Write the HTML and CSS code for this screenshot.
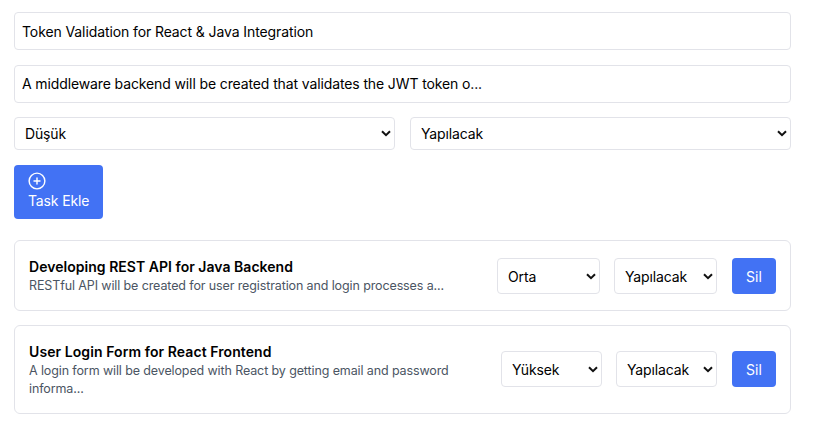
FILE: index.html
```
<!DOCTYPE html>
<html lang="tr">
<head>
<meta charset="utf-8">
<title>Tasks</title>
<link rel="stylesheet" href="styles.css">
</head>
<body>
<main class="page">
  <form class="task-form">
    <input class="field" type="text" value="Token Validation for React &amp; Java Integration">
    <input class="field field-desc" type="text" value="A middleware backend will be created that validates the JWT token o...">
    <div class="form-selects">
      <div class="select"><select><option>Düşük</option></select><svg class="chevron" viewBox="0 0 10 7"><path d="M1 1.2 5 5.2 9 1.2"/></svg></div>
      <div class="select"><select><option>Yapılacak</option></select><svg class="chevron" viewBox="0 0 10 7"><path d="M1 1.2 5 5.2 9 1.2"/></svg></div>
    </div>
    <button class="btn btn-add" type="button">
      <svg class="plus" viewBox="0 0 24 24"><path d="M12 8v8M8 12h8M22.5 12a10.5 10.5 0 1 1-21 0 10.5 10.5 0 0 1 21 0Z"/></svg>
      <span>Task Ekle</span>
    </button>
  </form>
  <section class="tasks">
    <article class="card">
      <div class="card-text">
        <h2>Developing REST API for Java Backend</h2>
        <p>RESTful API will be created for user registration and login processes a...</p>
      </div>
      <div class="card-actions">
        <div class="select"><select><option>Orta</option></select><svg class="chevron" viewBox="0 0 10 7"><path d="M1 1.2 5 5.2 9 1.2"/></svg></div>
        <div class="select"><select><option>Yapılacak</option></select><svg class="chevron" viewBox="0 0 10 7"><path d="M1 1.2 5 5.2 9 1.2"/></svg></div>
        <button class="btn btn-delete" type="button">Sil</button>
      </div>
    </article>
    <article class="card card-tall">
      <div class="card-text">
        <h2>User Login Form for React Frontend</h2>
        <p>A login form will be developed with React by getting email and password informa...</p>
      </div>
      <div class="card-actions">
        <div class="select"><select><option>Yüksek</option></select><svg class="chevron" viewBox="0 0 10 7"><path d="M1 1.2 5 5.2 9 1.2"/></svg></div>
        <div class="select"><select><option>Yapılacak</option></select><svg class="chevron" viewBox="0 0 10 7"><path d="M1 1.2 5 5.2 9 1.2"/></svg></div>
        <button class="btn btn-delete" type="button">Sil</button>
      </div>
    </article>
  </section>
</main>
</body>
</html>
```
FILE: styles.css
```
* { box-sizing: border-box; }
body { margin: 0; background: #fff; color: #000; font-family: Inter, "Liberation Sans", sans-serif; font-size: 14px; }
input, select, button { font: inherit; color: inherit; margin: 0; }
.page { width: 791px; padding: 12px 0 0 14px; }
.task-form { display: flex; flex-direction: column; align-items: flex-start; }
.field { width: 100%; height: 38px; padding: 1px 7px 0; border: 1px solid #e2e3e9; border-radius: 4px; background: #fff; letter-spacing: -0.1px; }
.field-desc { margin-top: 15px; padding: 0 7px 1px; letter-spacing: -0.12px; }
.form-selects { display: grid; grid-template-columns: 1fr 1fr; gap: 15px; width: 100%; margin-top: 14px; }
.select { position: relative; height: 33px; }
.select select { display: block; width: 100%; height: 100%; padding: 0 10px; appearance: none; border: 1px solid #e2e3e9; border-radius: 4px; background: #fff; letter-spacing: -0.15px; }
.chevron { position: absolute; right: 4px; top: 13px; width: 10px; height: 7px; fill: none; stroke: #111; stroke-width: 2; pointer-events: none; }
.btn { border: 0; border-radius: 4px; background: #4272f4; color: #fff; }
.btn-add { display: flex; flex-direction: column; align-items: flex-start; width: 89px; height: 54px; margin-top: 15px; padding: 7px 0 0 14px; line-height: 22px; letter-spacing: -0.15px; }
.plus { width: 18px; height: 18px; fill: none; stroke: #fff; stroke-width: 1.9; stroke-linecap: round; }
.tasks { display: flex; flex-direction: column; gap: 14px; margin-top: 21px; }
.card { display: flex; justify-content: space-between; height: 71px; padding: 17px 14px 0; border: 1px solid #e2e3e9; border-radius: 6px; }
.card-tall { height: 89px; }
.card-text { width: 438px; }
.card h2 { margin: 0; font-size: 14px; font-weight: 600; line-height: 18px; white-space: nowrap; letter-spacing: 0.03px; }
.card-tall h2 { letter-spacing: 0.08px; }
.card p { margin: 1px 0 0; color: #4b5563; font-size: 12.5px; line-height: 18px; letter-spacing: -0.115px; }
.card-actions { display: flex; }
.card-actions .select { width: 103px; height: 36px; margin-right: 14px; }
.card-actions .select + .select { margin-right: 15px; }
.card-actions .chevron { top: 15px; }
.card-tall .card-actions { padding-top: 8px; }
.card-tall .card-actions .select { width: 101px; }
.btn-delete { width: 44px; height: 36px; padding: 0; }
```
